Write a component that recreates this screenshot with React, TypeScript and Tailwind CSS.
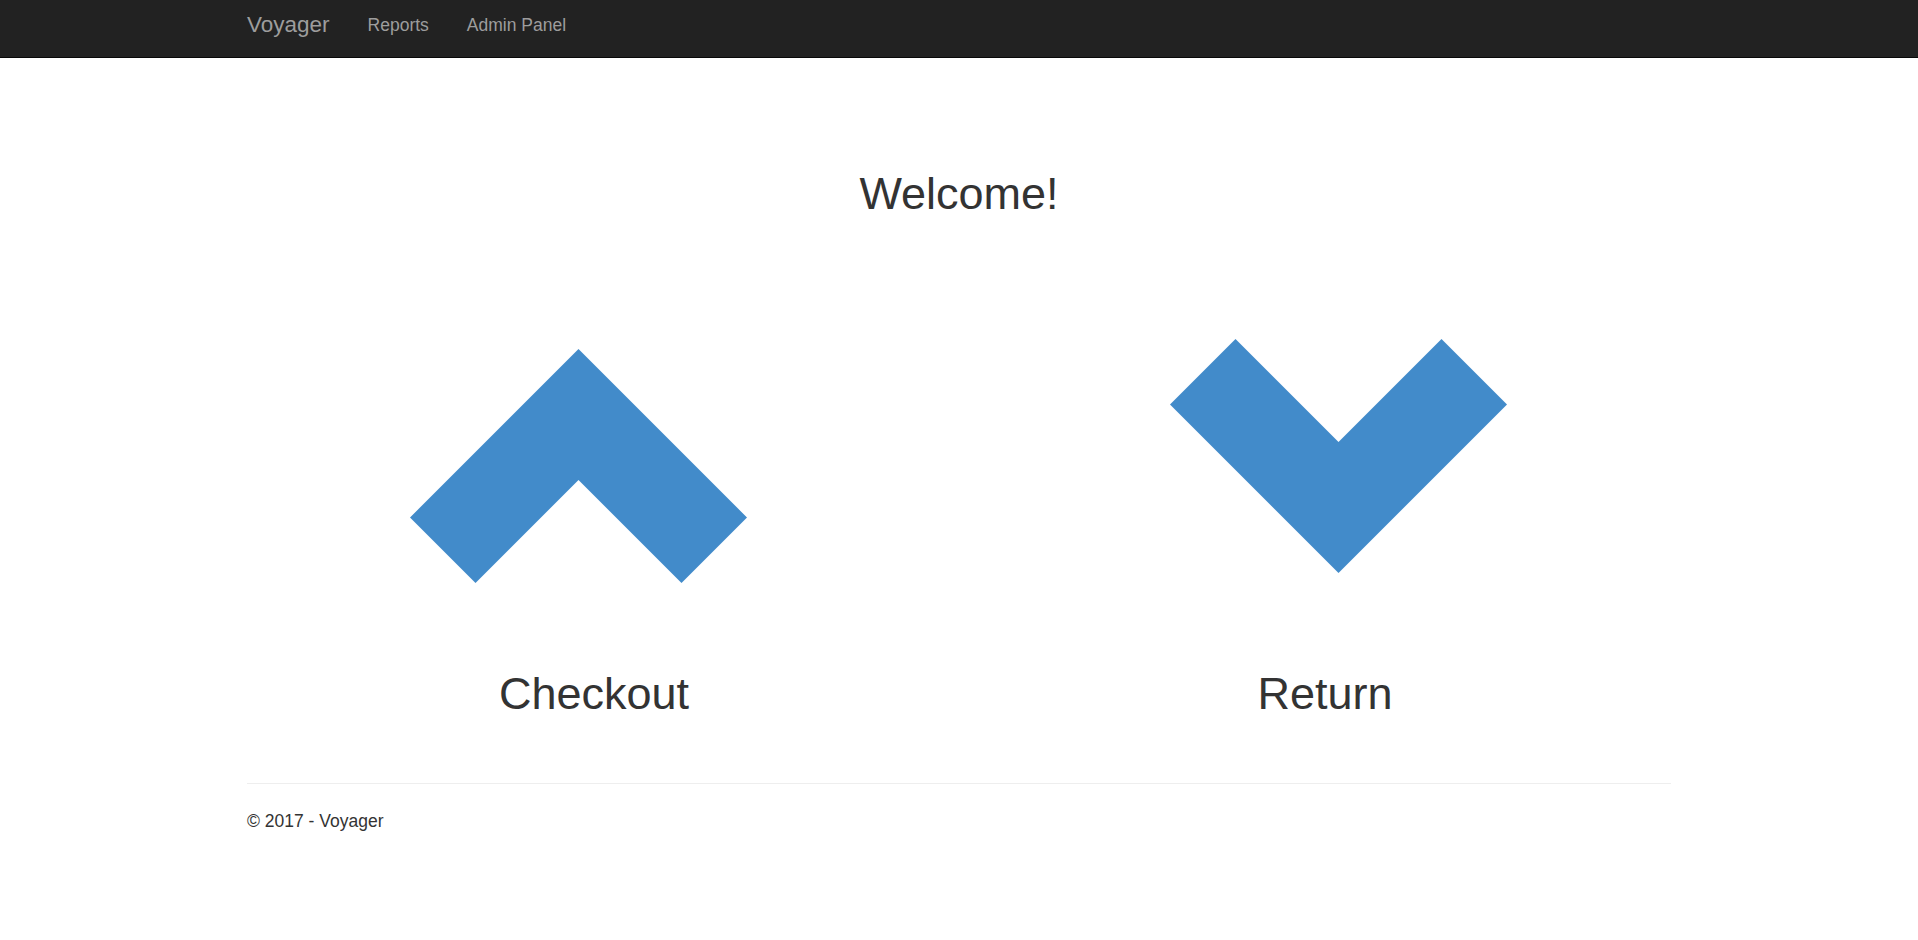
const font = { fontFamily: '"Liberation Sans", Arial, Helvetica, sans-serif' }

function ChevronUp() {
  return (
    <svg width="337" height="234" viewBox="0 0 337 234" className="block">
      <polygon points="168.5,0 337,168.5 271.5,234 168.5,131 65.5,234 0,168.5" fill="#428bca" />
    </svg>
  )
}

function ChevronDown() {
  return (
    <svg width="337" height="234" viewBox="0 0 337 234" className="block">
      <polygon points="168.5,234 337,65.5 271.5,0 168.5,103 65.5,0 0,65.5" fill="#428bca" />
    </svg>
  )
}

export default function App() {
  return (
    <div className="min-h-[940px] bg-white text-[#333]" style={font}>
      <nav className="h-[58px] bg-[#222] border-b border-[#080808]">
        <div className="mx-auto w-[1424px] flex items-start">
          <a className="mt-[14px] text-[22.5px] leading-[22.5px] text-[#9d9d9d]">Voyager</a>
          <a className="mt-[17px] ml-[38px] text-[17.5px] leading-[17.5px] text-[#9d9d9d]">Reports</a>
          <a className="mt-[17px] ml-[38px] text-[17.5px] leading-[17.5px] text-[#9d9d9d]">Admin Panel</a>
        </div>
      </nav>

      <main className="mx-auto w-[1424px]">
        <h1 className="mt-[113px] text-center text-[45px] leading-[45px] font-normal">Welcome!</h1>

        <div className="flex">
          <div className="w-[712px] flex flex-col">
            <div className="mt-[133px] ml-[163px]">
              <ChevronUp />
            </div>
            <h2 className="mt-[88px] ml-[227px] w-[240px] text-center text-[45px] leading-[45px] font-normal">
              Checkout
            </h2>
          </div>
          <div className="w-[712px] flex flex-col">
            <div className="mt-[123px] ml-[211px]">
              <ChevronDown />
            </div>
            <h2 className="mt-[98px] ml-[246px] w-[240px] text-center text-[45px] leading-[45px] font-normal">
              Return
            </h2>
          </div>
        </div>

        <hr className="mt-[67px] border-0 border-t border-[#eee]" />
        <footer className="mt-[29px] text-[17.5px] leading-[17.5px]">© 2017 - Voyager</footer>
      </main>
    </div>
  )
}
